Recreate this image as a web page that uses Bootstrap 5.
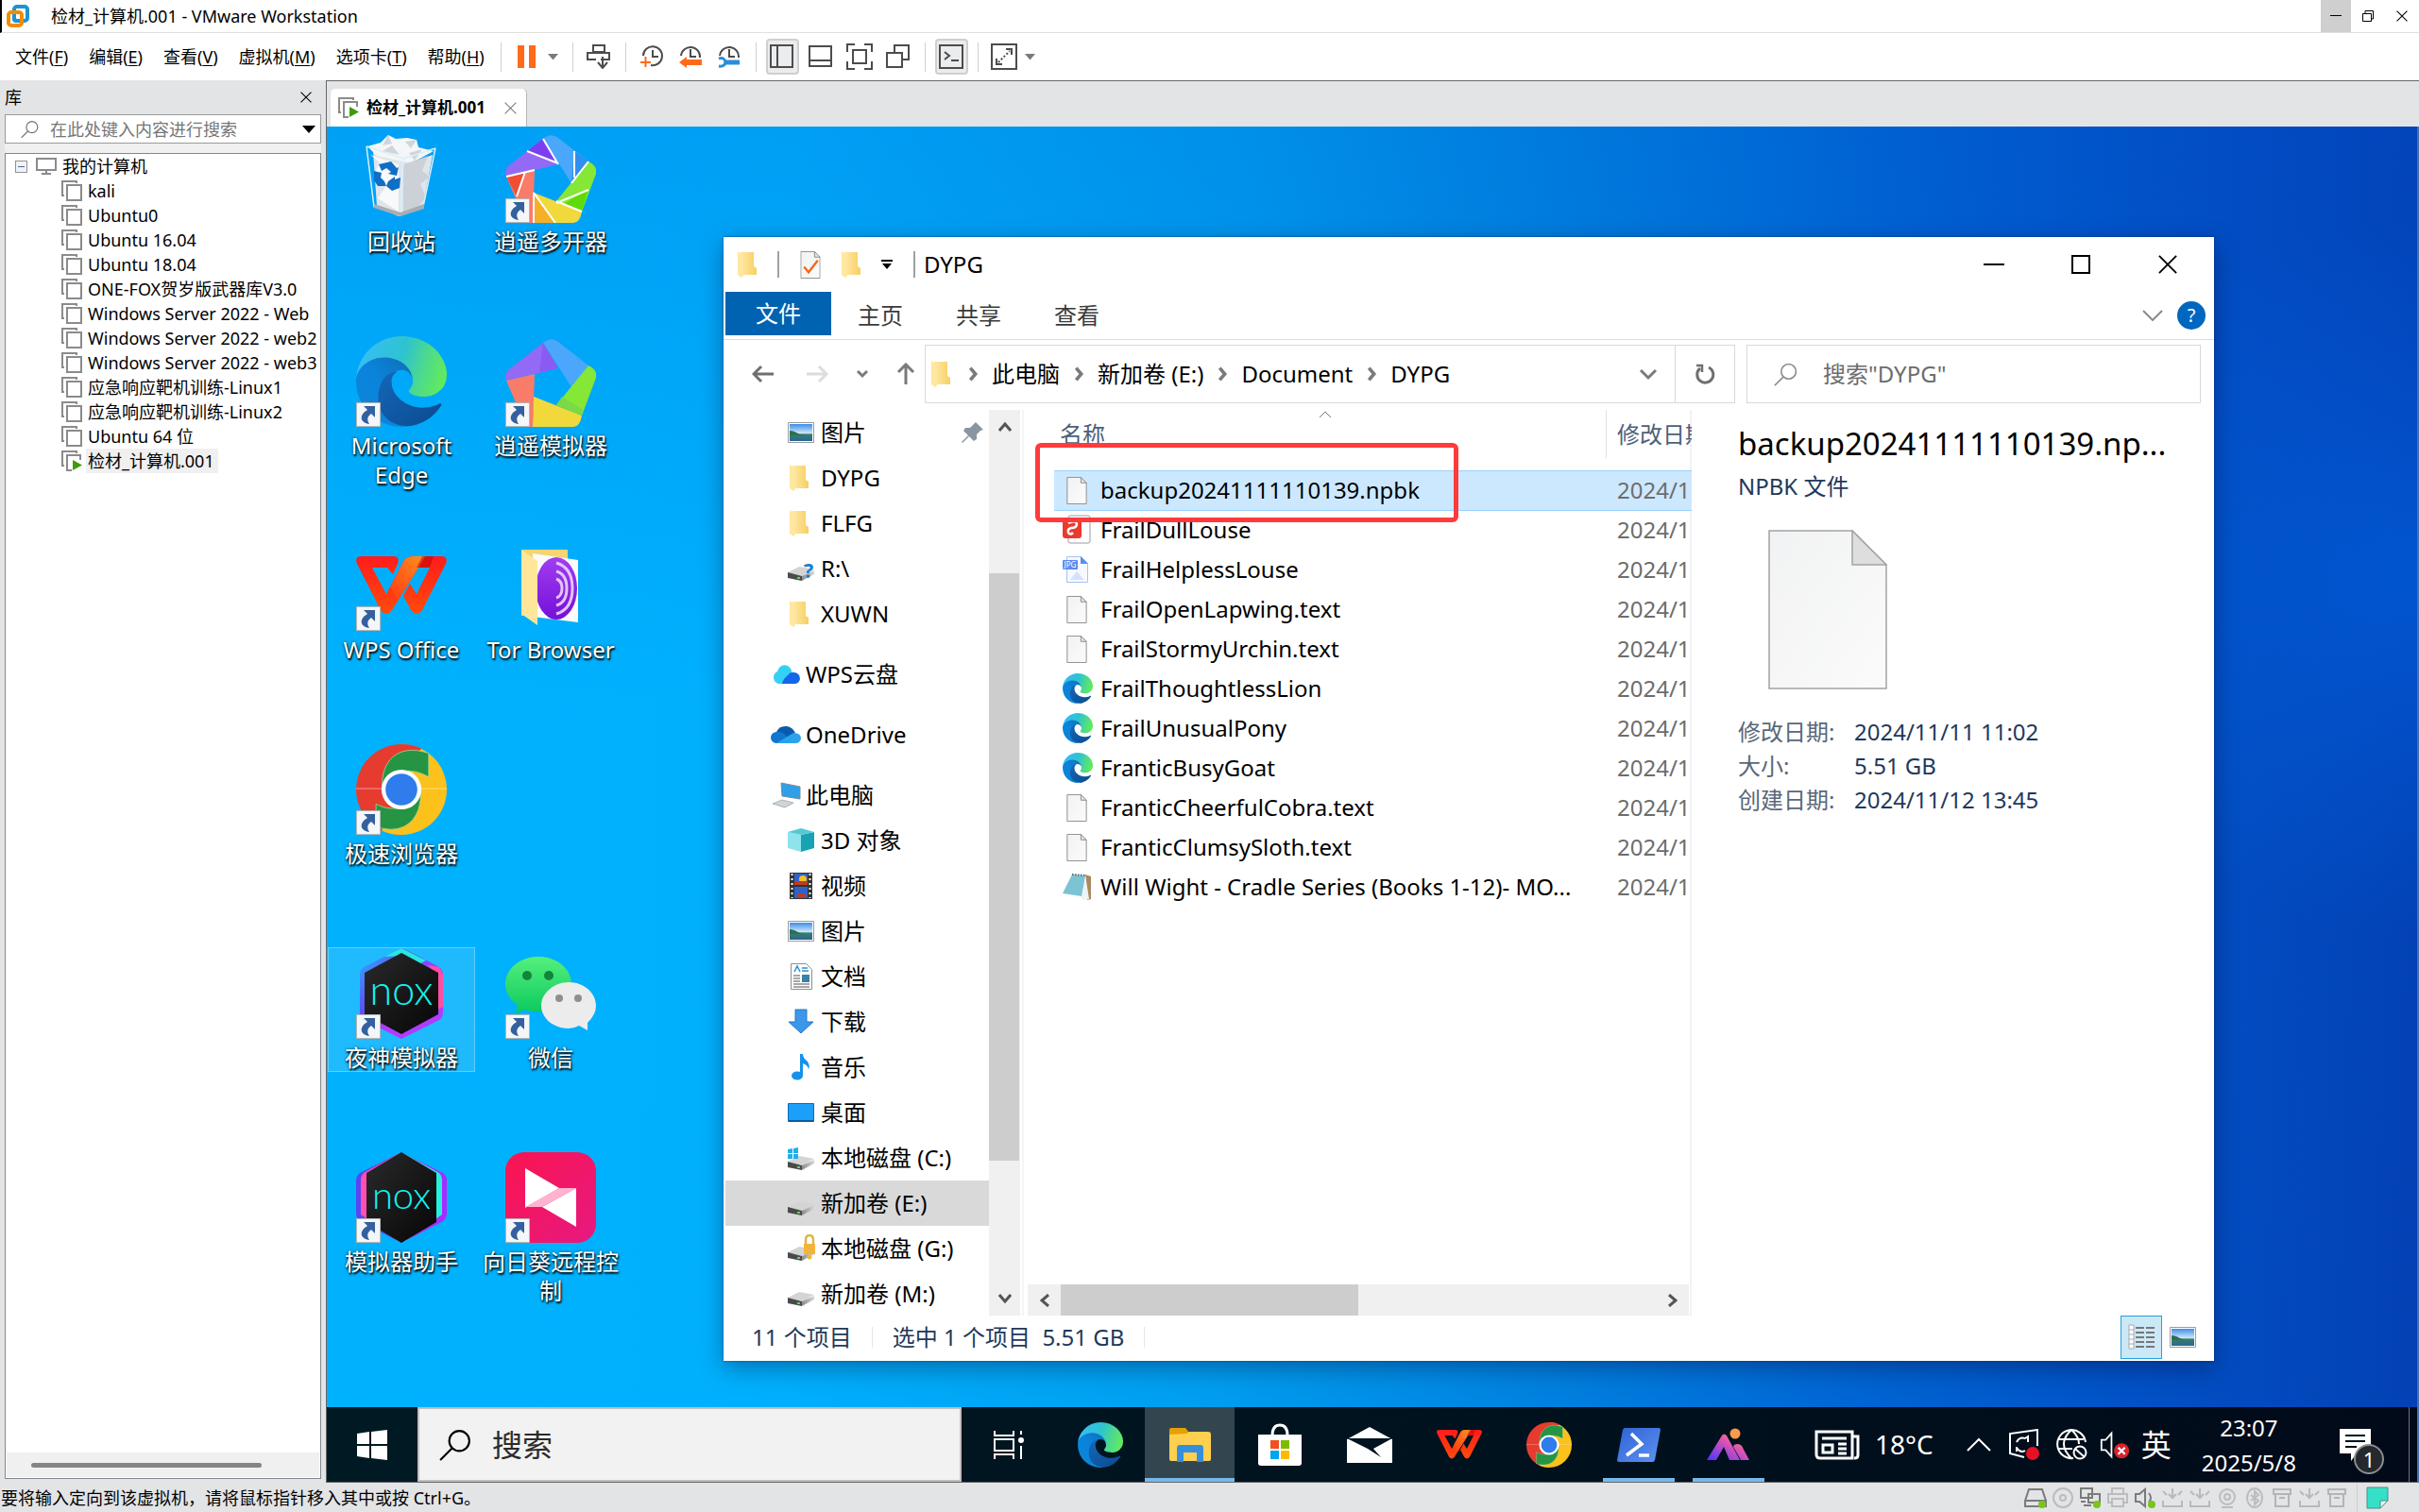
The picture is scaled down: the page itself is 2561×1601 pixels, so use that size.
<!DOCTYPE html>
<html lang="zh-CN">
<head>
<meta charset="utf-8">
<meta name="viewport" content="width=device-width, initial-scale=1">
<title>检材_计算机.001 - VMware Workstation</title>
<link href="https://cdn.jsdelivr.net/npm/bootstrap@5.3.0/dist/css/bootstrap.min.css" rel="stylesheet">
<style>
  body { font-family: "Noto Sans", "Noto Sans CJK SC", sans-serif; font-size: 18px; line-height: 26px; color: #000; background: #e3e4e6; }
  .btn { --bs-btn-font-size: inherit; --bs-btn-line-height: inherit; --bs-btn-color: inherit; --bs-btn-padding-x: 0; --bs-btn-padding-y: 0; --bs-btn-border-radius: 0; --bs-btn-border-width: 0; }
  a { color: inherit; text-decoration: none; }
  svg { flex: none; display: block; }
  input { min-width: 0; outline: 0; }
  u { text-underline-offset: 2px; }

  /* host window */
  .host-title { height: 35px; border-bottom: 1px solid #e0e0e0; border-left: 2px solid #000; }
  .host-title .btn { width: 36px; }
  .host-title .btn.hot { background: #cfcfcf; width: 32px; }
  .host-name { margin-left: 22px; padding-top: 4px; }
  .host-menu { height: 50px; padding-left: 16px; gap: 6px; background: #fff; }
  .menu-words { gap: 22px; margin-right: 7px; }
  .vline { width: 1px; height: 31px; background: #cfcfcf; margin: 0 4px; }
  .tool { width: 35px; height: 38px; }
  .tool.down { border: 2px solid #cfcfcf; background: #ebecee; border-radius: 4px; }
  .tool-caret { width: 20px; margin-left: -6px; }

  /* library */
  .library { width: 345px; padding: 0 5px 4px; }
  .lib-head { height: 36px; padding-right: 10px; }
  .lib-search { height: 31px; border: 1px solid #9a9a9a; padding: 0 5px 0 8px; }
  .lib-search input::placeholder { color: #777; opacity: 1; }
  .lib-gap { height: 10px; background: #f0f0f0; }
  .tree { border: 1px solid #828790; }
  .tree li { height: 26px; white-space: nowrap; padding-left: 59px; gap: 4px; }
  .tree li.root { padding-left: 10px; }
  .tree li a { padding: 0 2px; }
  .tree .on { background: #f0f0f0; padding-right: 4px; }
  .minus { width: 13px; height: 13px; border: 1px solid #919191; background: #f2f2f2; margin-right: 5px; }
  .minus::after { content: ""; display: block; width: 7px; height: 1px; margin: 5px 2px; background: #4568a8; }
  .tree-foot { height: 26px; background: #f0f0f0; margin: 0 1px 1px; padding-left: 26px; }
  .tree-foot div { width: 244px; height: 5px; border-radius: 3px; background: #858585; }

  /* tabs and guest */
  .stage { border-left: 1px solid #666; border-top: 1px solid #666; }
  .tabs { height: 48px; padding-left: 4px; }
  .vm-tab { width: 208px; height: 40px; background: #fff; border-radius: 5px 5px 0 0; border-right: 1px solid #b5b5b5; padding: 0 10px 0 8px; font-weight: 700; font-size: 17px; }
  .guest { border-bottom: 1px solid #666; border-right: 2px solid #4a6fae; }
  .desk { background: linear-gradient(180deg, rgba(0,70,200,.16), rgba(0,70,200,0) 45%), radial-gradient(circle at 100% 35%, rgba(0,100,230,.55), rgba(0,100,230,0) 16%), linear-gradient(92deg, #00b2fe 0%, #00b0fd 22%, #009eef 43%, #0083e0 58%, #0064d3 74%, #024fc4 88%, #0341b4 100%); }
  .shortcuts { display: grid; grid-template-columns: repeat(2, 158px); grid-auto-rows: 216px; padding-top: 5px; }
  .shortcut { margin: 0 1px 83px; padding: 1px 5px 0; text-align: center; color: #fff; font-size: 24px; line-height: 31px; text-shadow: 1px 2px 2px #000, 0 0 3px rgba(0,0,0,.7); height: 132px; }
  .shortcut svg { margin: 0 auto 4px; }
  .shortcut.on { background: rgba(255,255,255,.12); outline: 1px solid rgba(255,255,255,.3); outline-offset: -1px; }
  .shortcut svg text { text-shadow: none; }

  /* explorer */
  .explorer { position: absolute; left: 420px; top: 117px; right: 215px; bottom: 49px; background: #fff; font-size: 24px; line-height: 36px; box-shadow: 0 0 2px rgba(0,40,100,.8), 0 8px 24px rgba(0,0,40,.35); }
  .x-title { height: 58px; padding-right: 3px; }
  .qat { gap: 22px; padding-left: 15px; }
  .qat i { width: 2px; height: 28px; background: #a0a0a0; }
  .qat i.tail { margin-right: -13px; }
  .x-title .btn { width: 92px; }
  .ribbon { height: 51px; border-bottom: 1px solid #dadbdc; padding: 0 4px 0 2px; }
  .ribbon .btn { width: 104px; height: 49px; color: #3b3b3b; }
  .ribbon .btn.file { width: 112px; height: 46px; background: #0063b1; color: #fff; }
  .ribbon .btn.slim { width: 41px; }
  .addr-row { height: 74px; padding: 5px 14px 7px 0; }
  .hist { width: 213px; padding-left: 30px; gap: 29px; }
  .crumbs { border: 1px solid #d9d9d9; padding-left: 6px; gap: 14px; }
  .crumbs .go { width: 63px; border-left: 1px solid #d9d9d9; }
  .x-search { width: 481px; border: 1px solid #d9d9d9; margin-left: 12px; padding-left: 28px; gap: 27px; }
  .x-search svg { color: #8a8a8a; }
  .x-search input::placeholder { color: #6d6d6d; opacity: 1; }
  .nav-pane { width: 281px; padding-left: 2px; }
  .nav-pane a { height: 48px; padding-left: 64px; gap: 5px; white-space: nowrap; flex: none; }
  .nav-pane a.top { padding-left: 48px; margin-top: 16px; }
  .nav-pane a.on { background: #d9d9d9; }
  .nav-pane svg { width: 32px; height: 32px; }
  .nav-pane .pin { width: 24px; height: 24px; margin: 0 5px 0 auto; }
  .vbar { width: 35px; background: #f0f0f0; border-right: 2px solid #fff; }
  .vbar .btn { height: 36px; }
  .vbar .run { flex: 0 0 137px; }
  .vbar .thumb { flex: 0 0 622px; background: #cdcdcd; margin-right: 1px; }
  .list-pane { width: 709px; border-left: 2px solid #f5f5f5; border-right: 2px solid #f2f2f2; padding-left: 4px; }
  .filegrid { width: 675px; margin-left: 28px; table-layout: fixed; color: #000; }
  .filegrid col:first-child { width: 584px; }
  .filegrid th { height: 64px; padding: 0 0 12px 6px; font-weight: 400; color: #4c607a; white-space: nowrap; overflow: hidden; }
  .filegrid th + th { padding-left: 12px; background: linear-gradient(#e2e2e2,#e2e2e2) 0 0 / 1px 51px no-repeat; }
  .filegrid td { height: 42px; padding: 0 0 0 9px; white-space: nowrap; overflow: hidden; }
  .filegrid td + td { padding-left: 12px; color: #6d6d6d; }
  .filegrid .on td { background: #cce8ff; border-top: 1px solid #99d1ff; border-bottom: 1px solid #99d1ff; }
  .filegrid .doc { margin: 0 14px 0 4px; }
  .sort { position: absolute; left: 312px; top: 1px; }
  .ring { position: absolute; left: 12px; top: 35px; width: 448px; height: 84px; border: 5px solid #ff3b3b; border-radius: 6px; }
  .hbar { height: 33px; background: #f0f0f0; margin-right: 1px; }
  .hbar .btn { width: 35px; }
  .hbar .thumb { width: 315px; background: #cdcdcd; }
  .detail { padding: 15px 10px 0 49px; color: #1e395b; }
  .detail h1 { font-size: 33px; line-height: 42px; margin: 0 0 6px; color: #000; font-weight: 400; white-space: nowrap; }
  .detail svg { margin: 28px 0 27px 32px; }
  .detail dl { display: grid; grid-template-columns: 123px 1fr; margin: 0; }
  .detail dt { font-weight: 400; color: #5a6779; }
  .detail dd { margin: 0; }
  .x-status { height: 48px; padding: 0 11px 2px 30px; color: #1e395b; gap: 21px; }
  .x-status i { width: 1px; height: 22px; background: #e5e5e5; }
  .x-status .btn { width: 44px; height: 46px; }
  .x-status .btn.down { background: #cbe8f6; border: 1px solid #26a0da; }

  /* guest taskbar */
  .task { height: 79px; background: linear-gradient(90deg, #001a24, #00121e 55%, #020a19); color: #fff; font-size: 24px; line-height: 37px; }
  .start { width: 96px; }
  .t-search { width: 576px; background: #f2f2f2; border: 2px solid #bfbfbf; padding-left: 21px; gap: 22px; font-size: 32px; }
  .t-search input::placeholder { color: #2b2b2b; opacity: 1; }
  .app { width: 95px; border-bottom: 4px solid transparent !important; padding-top: 4px; }
  .app.run { background: linear-gradient(#76b9ed,#76b9ed) center bottom / 76px 4px no-repeat; background-origin: border-box; background-clip: border-box; }
  .app.on { background-color: #33464f; border-bottom-color: #76b9ed !important; }
  .app.view { width: 99px; }
  .big { font-size: 28px; }
  .ime { font-size: 32px; }
  .clock { margin: 0 38px 0 32px; text-align: center; }
  .note { position: relative; }
  .note span { position: absolute; left: 15px; top: 16px; width: 32px; height: 32px; border-radius: 50%; background: #25282c; border: 2px solid #8b8d90; font-size: 22px; line-height: 28px; text-align: center; }
  .peek { width: 9px; border-left: 1px solid #6b737d; }

  .host-status { height: 31px; padding: 0 32px 0 1px; }
  .host-status svg { width: 24px; height: 24px; }
  .devs { gap: 5px; }
</style>
<script src="https://cdn.jsdelivr.net/npm/bootstrap@5.3.0/dist/js/bootstrap.bundle.min.js"></script>
</head>
<body class="vh-100 overflow-hidden d-flex flex-column">

<svg width="0" height="0" class="position-absolute" aria-hidden="true">
  <defs>
    <linearGradient id="gE1" x1="0" y1="0" x2="1" y2="1"><stop offset="0" stop-color="#1467b8"/><stop offset="1" stop-color="#0c4a8f"/></linearGradient>
    <linearGradient id="gE2" x1="1" y1="0" x2="0" y2="1"><stop offset="0" stop-color="#0f6cae"/><stop offset=".5" stop-color="#0b83dc"/><stop offset="1" stop-color="#0b86d8"/></linearGradient>
    <linearGradient id="gE3" x1="0" y1=".3" x2="1" y2=".5"><stop offset="0" stop-color="#38bdf8"/><stop offset=".5" stop-color="#2ec3cf"/><stop offset=".75" stop-color="#4cd98f"/><stop offset="1" stop-color="#62ea5e"/></linearGradient>
    <linearGradient id="gW" x1="0" y1="0" x2="0" y2="1"><stop offset="0" stop-color="#ff1c1c"/><stop offset="1" stop-color="#ff4b0a"/></linearGradient>
    <linearGradient id="gWo" x1="1" y1="0" x2="0" y2="1"><stop offset="0" stop-color="#ff9020"/><stop offset="1" stop-color="#ff3a12"/></linearGradient>
    <linearGradient id="gF" x1="0" y1="0" x2="1" y2="0"><stop offset="0" stop-color="#ffe9a6"/><stop offset="1" stop-color="#f7cf63"/></linearGradient>
    <linearGradient id="gNx" x1="0" y1="0" x2="1" y2="1"><stop offset="0" stop-color="#2bb7ff"/><stop offset=".35" stop-color="#5a52f5"/><stop offset=".6" stop-color="#b13bff"/><stop offset="1" stop-color="#b13bff"/></linearGradient>
    <linearGradient id="gNb" x1="0" y1="0" x2="1" y2="1"><stop offset="0" stop-color="#2a2a2c"/><stop offset="1" stop-color="#060606"/></linearGradient>
    <linearGradient id="gWc" x1="0" y1="0" x2="0" y2="1"><stop offset="0" stop-color="#55f07d"/><stop offset="1" stop-color="#0ac85c"/></linearGradient>
    <linearGradient id="gSf" x1="0" y1="0" x2="1" y2="1"><stop offset="0" stop-color="#fb1450"/><stop offset="1" stop-color="#e51a80"/></linearGradient>
    <linearGradient id="gSky" x1="0" y1="0" x2="0" y2="1"><stop offset="0" stop-color="#3f8ee8"/><stop offset=".55" stop-color="#cfe9fb"/><stop offset=".6" stop-color="#3d7d64"/><stop offset="1" stop-color="#27679a"/></linearGradient>
    <linearGradient id="gDr" x1="0" y1="0" x2="1" y2="0"><stop offset="0" stop-color="#8c8c8c"/><stop offset="1" stop-color="#d9d9d9"/></linearGradient>
    <linearGradient id="gPs" x1="0" y1="0" x2="1" y2="1"><stop offset="0" stop-color="#2f62d6"/><stop offset="1" stop-color="#5d93f0"/></linearGradient>
    <linearGradient id="gAi" x1="1" y1="0" x2="0" y2="1"><stop offset="0" stop-color="#ffa64a"/><stop offset=".4" stop-color="#e256b0"/><stop offset="1" stop-color="#4a33ff"/></linearGradient>
    <linearGradient id="gTor" x1="0" y1="0" x2="0" y2="1"><stop offset="0" stop-color="#a13df0"/><stop offset="1" stop-color="#7410d8"/></linearGradient>
    <linearGradient id="gPg" x1="0" y1="0" x2="1" y2="1"><stop offset="0" stop-color="#f1f2f3"/><stop offset="1" stop-color="#fbfbfb"/></linearGradient>
  </defs>
  <symbol id="edge" viewBox="0 0 256 256">
    <path fill="url(#gE2)" d="M105.73 241.42a79.2 79.2 0 01-22.74-21.34 80.72 80.72 0 0129.53-120.48c3.14-1.46 8.46-4.1 15.54-3.99a32.37 32.37 0 0125.69 13 31.88 31.88 0 016.37 18.67c0-.2 24.48-79.6-80-79.6C36.2 47.7 0 89.5 0 126a130.15 130.15 0 0012.11 56 128 128 0 00156.38 67.11 75.55 75.55 0 01-62.78-8z"/>
    <path fill="url(#gE1)" d="M231 190.5a94 94 0 01-10.54 4.71 101.9 101.9 0 01-35.9 6.46c-47.32 0-88.54-32.55-88.54-74.32a31.48 31.48 0 0116.44-27.3c-42.8 1.8-53.8 46.4-53.8 72.53 0 73.88 68.09 81.37 82.76 81.37 7.91 0 19.84-2.3 27-4.56l1.31-.44a128.34 128.34 0 0066.6-52.8 4 4 0 00-5.32-5.75z" transform="translate(4)"/>
    <path fill="url(#gE3)" d="M152.33 148.86c-.81 1.05-3.3 2.5-3.3 5.66 0 2.61 1.7 5.12 4.72 7.23 14.38 10 41.49 8.68 41.56 8.68a59.56 59.56 0 0030.27-8.35A61.38 61.38 0 00256 109.2c.26-22.41-8-37.31-11.34-43.91C223.46 23.84 177.72 0 128 0A128 128 0 000 126.2c.48-36.54 36.8-66.05 80-66.05 3.5 0 23.46.34 42 10.07 16.34 8.58 24.9 18.94 30.85 29.21 6.18 10.67 7.28 24.15 7.28 29.52s-2.74 13.33-7.8 19.91z"/>
  </symbol>
  <symbol id="chrome" viewBox="0 0 100 100">
    <path fill="#e63c30" d="M50 0a50 50 0 0 0 0 100z"/><path fill="#fcc11a" d="M50 0a50 50 0 0 1 0 100z"/>
    <path fill="#e63c30" d="M50 0Q64 0 72 5L50 30z"/><path fill="#fcc11a" d="M50 100Q36 100 28 95L50 70z"/>
    <path d="M0 49H100" stroke="#fff" stroke-width=".7" opacity=".7"/>
    <path fill="#259543" stroke="#a8d9a0" stroke-width=".8" d="M29 48C27 20 45-2 80 10V36C62 26 44 26 29 48z"/>
    <path fill="#259543" stroke="#a8d9a0" stroke-width=".8" d="M71 52C73 80 55 102 22 91V66C38 74 56 74 71 52z"/>
    <circle cx="50" cy="50" r="22" fill="#fff"/><circle cx="50" cy="50" r="17.500" fill="#2f7ced"/>
  </symbol>
  <symbol id="wps" viewBox="0 0 96 62">
    <path fill="url(#gW)" fill-rule="evenodd" d="M1 8Q-2 0 6 0H39Q47 0 44 8L39 19 33 12H17L32 40 50 6Q53 0 60 0H90Q98 0 95 8L70 57Q64 65 58 57L50 42 57 29 64 40 78 12H66L38 57Q32 65 26 57z"/>
    <path fill="url(#gWo)" d="M50 6Q53 0 60 0H73L66 12 44 47 36 33z"/><path fill="#b80000" opacity=".5" d="M70 0H82L78 12H64z"/>
  </symbol>
  <symbol id="cut" viewBox="0 0 26 26"><path fill="#f4f6f8" stroke="#b5b5b5" d="M.5.5h25v25H.5z"/><path fill="#34609f" d="M8 4h12v12l-4-4c-4 3-5 6-2 11C5 22 2 14 12 8z"/></symbol>
  <symbol id="folder" viewBox="0 0 20 28"><path fill="url(#gF)" d="M3 1h14v15l3 2v7H3z"/><path fill="#ffe7a0" d="M0 0l6 4v22l-2 2-4-3z"/></symbol>
  <symbol id="page" viewBox="0 0 22 30"><path fill="url(#gPg)" stroke="#8e8e8e" d="M.5.5h15l6 6v23H.5z"/><path fill="#e3e3e3" stroke="#8e8e8e" d="M15.500.5v6h6z"/></symbol>
  <symbol id="clones" viewBox="0 0 22 22"><g fill="none" stroke="#8b8b8b" stroke-width="2"><path d="M3 16H1V1h15v2"/><path fill="#fff" d="M6 5h15v16H6z"/></g></symbol>
  <symbol id="clones-on" viewBox="0 0 22 22"><g fill="none" stroke="#8b8b8b" stroke-width="2"><path d="M3 16H1V1h15v2M20 10V5H6v16h5"/></g><path fill="#3f9b0b" d="M12 10l10 5.500-10 5.500z"/></symbol>
  <symbol id="glass" viewBox="0 0 32 32"><g fill="none" stroke="currentColor" stroke-width="2"><circle cx="20" cy="12" r="10"/><path d="M13 19L1 31"/></g></symbol>
  <symbol id="drive" viewBox="0 0 32 32"><path fill="#d4d4d4" d="M2 20l12-6 16 3-13 7z"/><path fill="url(#gDr)" d="M17 24l13-6v4l-13 7z"/><path fill="#4a4a4a" d="M2 20l15 4v5L2 26z"/><path fill="#5fd35f" d="M12 25h3v2h-3z"/></symbol>
  <symbol id="pic" viewBox="0 0 32 32"><path fill="#fff" stroke="#9a9a9a" d="M2.500 5.500h27v21h-27z"/><path fill="url(#gSky)" d="M4 7h24v18H4z"/><path fill="#2b7050" d="M4 14c6 0 10 5 16 5H4z"/></symbol>
  <symbol id="winlogo" viewBox="0 0 32 32"><path d="M0 4l13-2v13H0zM15 2l17-2v15H15zM0 17h13v13l-13-2zM15 17h17v15l-17-2z"/></symbol>
  <symbol id="chev" viewBox="0 0 12 20"><path fill="none" stroke="#7a7a7a" stroke-width="4" d="M3 3l6 7-6 7"/></symbol>
  <symbol id="closex" viewBox="0 0 22 22"><path fill="none" stroke="currentColor" stroke-width="2" d="M1 1l20 20M21 1L1 21"/></symbol>
  <symbol id="usb" viewBox="0 0 24 24"><path fill="none" stroke="#b9b9bd" stroke-width="2" d="M12 2v10M8 8l4 4 4-4M2 15v6h20v-6M2 5l4 4M22 5l-4 4"/></symbol>
  <symbol id="box" viewBox="0 0 24 24"><path fill="none" stroke="#b4b4b8" stroke-width="2" d="M3 3h18v5H3zM5 8v13h14V8M9 12h6"/></symbol>
</svg>

<header class="host-title d-flex bg-white flex-shrink-0">
  <svg class="ms-1 mt-1" width="26" height="26" viewBox="0 0 26 26" fill="none" stroke-width="4"><rect x="9" y="3" width="14" height="15" rx="3" stroke="#1f93d0"/><rect x="3" y="9" width="14" height="14" rx="3" stroke="#f38b00"/><path stroke="#1f93d0" d="M9 12v4q0 2 2 2h4"/></svg>
  <span class="host-name">检材_计算机.001 - VMware Workstation</span>
  <div class="ms-auto d-flex">
    <button class="btn hot" aria-label="最小化"><svg class="m-auto" width="12" height="2"><path d="M0 0h12v1H0z"/></svg></button>
    <button class="btn" aria-label="还原"><svg class="m-auto" width="14" height="14" fill="none" stroke="#000"><path d="M1.500 4.500h9v8h-9zM4 4V1.500h8.500V10H11"/></svg></button>
    <button class="btn" aria-label="关闭"><svg class="m-auto" width="12" height="12"><use href="#closex"/></svg></button>
  </div>
</header>

<nav class="host-menu d-flex align-items-center flex-shrink-0">
  <div class="menu-words d-flex">
    <button class="btn">文件(<u>F</u>)</button><button class="btn">编辑(<u>E</u>)</button><button class="btn">查看(<u>V</u>)</button><button class="btn">虚拟机(<u>M</u>)</button><button class="btn">选项卡(<u>T</u>)</button><button class="btn">帮助(<u>H</u>)</button>
  </div>
  <div class="vline"></div>
  <button class="btn tool" aria-label="挂起"><svg class="m-auto" width="20" height="26"><path fill="#ff6a1a" d="M0 1h7v24H0zM12 1h7v24h-7z"/></svg></button>
  <button class="btn tool-caret" aria-label="电源选项"><svg class="m-auto" width="11" height="7"><path fill="#7a7a7a" d="M0 0h11l-5.500 6.500z"/></svg></button>
  <div class="vline"></div>
  <button class="btn tool" aria-label="发送按键"><svg class="m-auto" width="26" height="26" fill="none" stroke="#4c4c4c" stroke-width="2"><path d="M7 1h12v7H7zM15 16h9V9H1v7h9M17 13v11M12 19l5 6 5-6"/></svg></button>
  <div class="vline"></div>
  <button class="btn tool" aria-label="拍摄快照"><svg class="m-auto" width="26" height="26" fill="none" stroke="#4c4c4c" stroke-width="2"><path d="M4 12a10 10 0 1 1 8 10M14 6v7h6"/><path stroke="#ff6a1a" d="M1 19h11M6.500 13v11"/></svg></button>
  <button class="btn tool" aria-label="恢复快照"><svg class="m-auto" width="26" height="26" fill="none" stroke="#4c4c4c" stroke-width="2"><path d="M3 12a10 10 0 1 1 20 2M13 5v8h6"/><path fill="#ff6a1a" stroke="none" d="M1 19l8-6v3h16v6H9v3z"/></svg></button>
  <button class="btn tool" aria-label="管理快照"><svg class="m-auto" width="26" height="26" fill="none" stroke="#4c4c4c" stroke-width="2"><path d="M3 12a10 10 0 1 1 20 2M13 5v8h6"/><path stroke="#2a8fd8" stroke-width="5" d="M9 19h15"/><path stroke="#2a8fd8" stroke-width="3" d="M2 15q6-2 7 4-1 5-7 4"/></svg></button>
  <div class="vline"></div>
  <button class="btn tool down" aria-label="显示库"><svg class="m-auto" width="26" height="26" fill="none" stroke="#4c4c4c" stroke-width="2"><path d="M1 1h23v23H1zM8 1v23"/></svg></button>
  <button class="btn tool" aria-label="缩略图栏"><svg class="m-auto" width="26" height="26" fill="none" stroke="#4c4c4c" stroke-width="2"><path d="M1 2h23v21H1zM1 17h23"/></svg></button>
  <button class="btn tool" aria-label="全屏"><svg class="m-auto" width="28" height="28" fill="none" stroke="#4c4c4c" stroke-width="2"><path d="M1 9V1h8M19 1h8v8M27 19v8h-8M9 27H1v-8M7 7h14v14H7z"/></svg></button>
  <button class="btn tool" aria-label="Unity"><svg class="m-auto" width="26" height="26" fill="none" stroke="#4c4c4c" stroke-width="2"><path d="M9 8V1h15v15h-7M1 9h16v15H1z"/></svg></button>
  <div class="vline"></div>
  <button class="btn tool down" aria-label="控制台"><svg class="m-auto" width="28" height="28" fill="none" stroke="#4c4c4c" stroke-width="2"><path d="M2 2h24v24H2zM7 9l5 4-5 4M14 18h8"/></svg></button>
  <div class="vline"></div>
  <button class="btn tool" aria-label="拉伸"><svg class="m-auto" width="28" height="28" fill="none" stroke="#4c4c4c" stroke-width="2"><path d="M1 1h26v26H1zM16 6h6v6M6 16v6h6"/><path stroke-dasharray="2 2" d="M8 20L20 8"/></svg></button>
  <button class="btn tool-caret" aria-label="拉伸选项"><svg class="m-auto" width="11" height="7"><path fill="#7a7a7a" d="M0 0h11l-5.500 6.500z"/></svg></button>
</nav>

<div class="d-flex flex-grow-1 overflow-hidden">
  <aside class="library d-flex flex-column flex-shrink-0">
    <div class="lib-head d-flex align-items-center justify-content-between"><span>库</span><button class="btn" aria-label="关闭库"><svg width="12" height="12"><use href="#closex"/></svg></button></div>
    <label class="lib-search d-flex align-items-center bg-white">
      <svg class="mx-2 text-secondary" width="19" height="20"><use href="#glass"/></svg>
      <input class="border-0 p-0 ms-1 flex-grow-1 bg-transparent" placeholder="在此处键入内容进行搜索" aria-label="搜索库">
      <svg width="14" height="8"><path d="M0 0h14L7 8z"/></svg>
    </label>
    <div class="lib-gap"></div>
    <div class="tree flex-grow-1 bg-white d-flex flex-column justify-content-between overflow-hidden">
      <ul class="list-unstyled mb-0 overflow-hidden">
        <li class="root d-flex align-items-center"><span class="minus"></span><svg width="22" height="18" fill="none" stroke="#8b8b8b" stroke-width="2"><path d="M1 1h20v12H1zM11 13v3M6 17h10"/></svg><a href="#">我的计算机</a></li>
        <li class="d-flex align-items-center"><svg width="22" height="22"><use href="#clones"/></svg><a href="#">kali</a></li>
        <li class="d-flex align-items-center"><svg width="22" height="22"><use href="#clones"/></svg><a href="#">Ubuntu0</a></li>
        <li class="d-flex align-items-center"><svg width="22" height="22"><use href="#clones"/></svg><a href="#">Ubuntu 16.04</a></li>
        <li class="d-flex align-items-center"><svg width="22" height="22"><use href="#clones"/></svg><a href="#">Ubuntu 18.04</a></li>
        <li class="d-flex align-items-center"><svg width="22" height="22"><use href="#clones"/></svg><a href="#">ONE-FOX贺岁版武器库V3.0</a></li>
        <li class="d-flex align-items-center"><svg width="22" height="22"><use href="#clones"/></svg><a href="#">Windows Server 2022 - Web</a></li>
        <li class="d-flex align-items-center"><svg width="22" height="22"><use href="#clones"/></svg><a href="#">Windows Server 2022 - web2</a></li>
        <li class="d-flex align-items-center"><svg width="22" height="22"><use href="#clones"/></svg><a href="#">Windows Server 2022 - web3</a></li>
        <li class="d-flex align-items-center"><svg width="22" height="22"><use href="#clones"/></svg><a href="#">应急响应靶机训练-Linux1</a></li>
        <li class="d-flex align-items-center"><svg width="22" height="22"><use href="#clones"/></svg><a href="#">应急响应靶机训练-Linux2</a></li>
        <li class="d-flex align-items-center"><svg width="22" height="22"><use href="#clones"/></svg><a href="#">Ubuntu 64 位</a></li>
        <li class="d-flex align-items-center"><svg width="22" height="22"><use href="#clones-on"/></svg><a href="#" class="on">检材_计算机.001</a></li>
      </ul>
      <div class="tree-foot d-flex align-items-center"><div></div></div>
    </div>
  </aside>

  <main class="stage flex-grow-1 d-flex flex-column overflow-hidden">
    <div class="tabs d-flex align-items-end flex-shrink-0">
      <div class="vm-tab d-flex align-items-center"><svg width="22" height="22"><use href="#clones-on"/></svg><span class="ms-2">检材_计算机.001</span><button class="btn ms-auto text-black-50" aria-label="关闭选项卡"><svg width="13" height="13"><use href="#closex"/></svg></button></div>
    </div>

    <div class="guest flex-grow-1 d-flex flex-column overflow-hidden">
      <div class="desk flex-grow-1 position-relative overflow-hidden">
        <div class="shortcuts">
          <a href="#" class="shortcut"><svg width="96" height="96" viewBox="0 0 96 96"><path fill="#dfe5ea" d="M18 20l40 12 23-8-10 54-26 11-23-10z"/><path fill="#f5f6f7" d="M12 15l14-4 8-8 8 4 12-1 10 2 2 8 16 4-24 13-36-8z"/><path fill="#cfd5da" d="M34 3l4 9-10 2zM52 10l12-2-6 9zM28 20l10-6 8 10zM56 22l14-4-8 12z"/><path fill="#fff" opacity=".75" d="M15 24l10 8-6 12 12 14-8 12 22 14V34z"/><path fill="#c3c9cf" opacity=".7" d="M50 34l26-9-6 16 8 6-10 8 6 14-12 14-12 4z"/><path fill="none" stroke="#d8f0fb" stroke-width="1.500" d="M11 15l39 13 34-11M11 15l8 64 28 9 24-9 13-62M50 28l-3 60"/><path fill="#a7adb3" d="M19 76l28 9 25-9v5l-25 8-28-9z"/><path fill="#0f6fc6" d="M24 34l13-3 6 7 2-1-2 9-9-2 3-2-5-4-5 3zM19 41l8 2-1 5 4 4 2 5H23l-4-6zM34 52l7-5v3l6-2-1 11-8 3-6-5z"/></svg>回收站</a>
          <a href="#" class="shortcut"><svg width="96" height="96" viewBox="0 0 96 96"><path fill="#936af5" d="M40 7L56 34 1 47Q-1 40 3 36z"/><path fill="#7b3ff2" d="M40 7L56 34 23 20z"/><path fill="#4aa7fb" d="M40 7Q48 0 56 6L88 31 70 54z"/><path fill="#2f8fee" d="M73 20L88 31 70 54z"/><path fill="#f97b69" d="M1 47L31 40 29 96H22z"/><path fill="#f04f33" d="M1 47l20-5-9 26z"/><path fill="#f2d93b" d="M30 64L81 84Q79 96 72 96H29z"/><path fill="#f5b027" d="M30 64L52 96H29z"/><path fill="#85e736" d="M88 31Q98 36 96 44L81 84 54 73z"/><path fill="#5ddc07" d="M88 60L81 84 62 76z"/><path fill="none" stroke="#fff" stroke-width="2" d="M40 7L56 34M23 20l33 13M1 47l30-7M21 42L12 68M88 31L70 54M73 20v28M54 75l34-14M54 73l27 11M30 64v32M30 64l23 32"/><use href="#cut" y="70" width="26" height="26"/></svg>逍遥多开器</a>
          <a href="#" class="shortcut"><svg width="96" height="96" viewBox="0 0 96 96"><use href="#edge" width="96" height="96"/><use href="#cut" y="70" width="26" height="26"/></svg>Microsoft Edge</a>
          <a href="#" class="shortcut"><svg width="96" height="96" viewBox="0 0 96 96"><path fill="#936af5" d="M40 7L56 34 1 47Q-1 40 3 36z"/><path fill="#8452f0" opacity=".6" d="M40 7L56 34 36 38z"/><path fill="#4aa7fb" d="M40 7Q48 0 56 6L88 31 70 54z"/><path fill="#f97b69" d="M1 47L31 40 29 96H22z"/><path fill="#f2d93b" d="M30 64L81 84Q79 96 72 96H29z"/><path fill="#85e736" d="M88 31Q98 36 96 44L81 84 54 73z"/><path fill="#7ad944" d="M60 64L82 78 81 84 54 73z"/><use href="#cut" y="70" width="26" height="26"/></svg>逍遥模拟器</a>
          <a href="#" class="shortcut"><svg width="96" height="96" viewBox="0 0 96 96"><use href="#wps" y="17" width="96" height="62"/><use href="#cut" y="70" width="26" height="26"/></svg>WPS Office</a>
          <a href="#" class="shortcut"><svg width="96" height="96" viewBox="0 0 96 96"><path fill="#f6d373" d="M17 10h49v70H17z"/><path fill="#fbfbfb" d="M29 14l48 7v66l-48-6z"/><ellipse cx="54" cy="51" rx="22" ry="33" fill="url(#gTor)"/><g fill="none" stroke="#e3c4fb" stroke-width="3"><path d="M54 24q17 5 17 27t-17 27M54 33q11 3 11 18t-11 18M54 41q6 2 6 10t-6 10"/></g><path fill="#ffe69a" d="M17 10l17 12v68L17 78z"/></svg>Tor Browser</a>
          <a href="#" class="shortcut"><svg width="96" height="96"><use href="#chrome"/><use href="#cut" y="70" width="26" height="26"/></svg>极速浏览器</a>
          <span></span>
          <a href="#" class="shortcut on"><svg width="96" height="96" viewBox="0 0 96 96"><path fill="url(#gNx)" d="M48 0Q51 0 88 20 92 23 92 28V68Q92 73 88 76L48 96 8 76Q4 73 4 68V28Q4 23 8 20z"/><path fill="#25e8e0" d="M30 9L48 0 74 13 66 17 48 8z"/><path fill="#ff4fa5" d="M76 18L88 20 92 28V62L84 66V26z"/><path fill="url(#gNb)" d="M48 5L87 26V70L48 91 9 70V26z"/><text x="48" y="60" text-anchor="middle" font-family="Lato" font-weight="300" font-size="43" fill="#12f5f0">nox</text><use href="#cut" y="70" width="26" height="26"/></svg>夜神模拟器</a>
          <a href="#" class="shortcut"><svg width="96" height="96" viewBox="0 0 96 96"><path fill="url(#gWc)" d="M35 9c20 0 35 13 35 29S55 67 35 67q-9 0-15-2l-9 5 2-10C5 55 0 47 0 38 0 22 15 9 35 9z"/><circle cx="23" cy="29" r="5" fill="#12843c"/><circle cx="46" cy="29" r="5" fill="#12843c"/><path fill="#ececec" d="M67 36c16 0 29 11 29 25q0 9-9 18l0 8-9-5q-5 3-11 3c-16 0-29-11-29-24s13-25 29-25z"/><circle cx="57" cy="53" r="4" fill="#8f8f8f"/><circle cx="77" cy="53" r="4" fill="#8f8f8f"/><use href="#cut" y="70" width="26" height="26"/></svg>微信</a>
          <a href="#" class="shortcut"><svg width="96" height="96" viewBox="0 0 96 96"><path fill="#5a45f0" d="M44 2L4 22Q0 25 0 30V64Q0 70 4 73L44 94z"/><path fill="#a92bff" d="M52 2L92 22Q96 25 96 30V64Q96 70 92 73L52 94z"/><path fill="#ff4fb0" d="M44 2L8 22Q5 25 5 30V66L44 94z"/><path fill="#25f0dc" d="M52 2L88 22Q91 25 91 30V66L52 94z"/><path fill="url(#gNb)" d="M48 0L85 22V74L48 96 11 74V22z"/><text x="48" y="60" text-anchor="middle" font-family="Lato" font-weight="300" font-size="40" fill="#12f5f0">nox</text><use href="#cut" y="70" width="26" height="26"/></svg>模拟器助手</a>
          <a href="#" class="shortcut"><svg width="96" height="96" viewBox="0 0 96 96"><rect width="96" height="96" rx="20" fill="url(#gSf)"/><path fill="#fff" d="M21 17L57 38 21 59zM75 38V79L39 58z"/><path fill="#ffb3d0" d="M57 38H75L39 58H21z"/><use href="#cut" y="70" width="26" height="26"/></svg>向日葵远程控制</a>
        </div>

        <section class="explorer d-flex flex-column">
          <div class="x-title d-flex flex-shrink-0">
            <div class="qat d-flex align-items-center">
              <svg width="20" height="28"><use href="#folder"/></svg><i></i>
              <svg width="22" height="29" viewBox="0 0 22 30"><use href="#page"/><path fill="none" stroke="#f26a1b" stroke-width="2.500" d="M4 17l5 6 10-13"/></svg>
              <svg width="20" height="28"><use href="#folder"/></svg>
              <svg width="12" height="10"><path d="M0 0h12v2H0zM1 4h10l-5 6z"/></svg><i class="tail"></i>
              <span>DYPG</span>
            </div>
            <div class="ms-auto d-flex">
              <button class="btn" aria-label="最小化"><svg class="m-auto" width="22" height="22"><path d="M0 10h22v2H0z"/></svg></button>
              <button class="btn" aria-label="最大化"><svg class="m-auto" width="20" height="20"><path fill="none" stroke="#000" stroke-width="2" d="M1 1h18v18H1z"/></svg></button>
              <button class="btn" aria-label="关闭"><svg class="m-auto" width="20" height="20"><use href="#closex"/></svg></button>
            </div>
          </div>
          <div class="ribbon d-flex flex-shrink-0">
            <button class="btn file">文件</button><button class="btn">主页</button><button class="btn">共享</button><button class="btn">查看</button>
            <button class="btn slim ms-auto" aria-label="展开功能区"><svg class="m-auto" width="22" height="12"><path fill="none" stroke="#8b8b8b" stroke-width="2" d="M1 1l10 10L21 1"/></svg></button>
            <button class="btn slim" aria-label="帮助"><svg class="m-auto" width="30" height="30"><circle cx="15" cy="15" r="15" fill="#0067c0"/><text x="15" y="22" text-anchor="middle" font-size="20" fill="#fff">?</text></svg></button>
          </div>
          <div class="addr-row d-flex flex-shrink-0">
            <div class="hist d-flex align-items-center flex-shrink-0">
              <button class="btn me-1" aria-label="后退"><svg width="24" height="20" fill="none" stroke="#6f6f6f" stroke-width="3"><path d="M2 10h21M10 2l-8 8 8 8"/></svg></button>
              <button class="btn" aria-label="前进"><svg width="24" height="20" fill="none" stroke="#dcdcdc" stroke-width="3"><path d="M22 10H1M14 2l8 8-8 8"/></svg></button>
              <button class="btn" aria-label="最近位置"><svg width="14" height="10" fill="none" stroke="#7a7a7a" stroke-width="3"><path d="M2 2l5 5 5-5"/></svg></button>
              <button class="btn" aria-label="向上"><svg width="20" height="24" fill="none" stroke="#7a7a7a" stroke-width="3"><path d="M10 23V2M2 10l8-8 8 8"/></svg></button>
            </div>
            <div class="crumbs d-flex align-items-center flex-grow-1">
              <svg width="20" height="28"><use href="#folder"/></svg><svg class="ms-1" width="12" height="18"><use href="#chev"/></svg>
              <a href="#">此电脑</a><svg width="12" height="18"><use href="#chev"/></svg><a href="#">新加卷 (E:)</a><svg width="12" height="18"><use href="#chev"/></svg><a href="#">Document</a><svg width="12" height="18"><use href="#chev"/></svg><a href="#">DYPG</a>
              <button class="btn ms-auto me-1" aria-label="以前的位置"><svg width="20" height="13" fill="none" stroke="#7a7a7a" stroke-width="3"><path d="M2 2l8 8 8-8"/></svg></button>
              <button class="btn go h-100" aria-label="刷新"><svg class="m-auto" width="22" height="22" fill="none" stroke="#6f6f6f" stroke-width="3"><path d="M15 4a8.500 8.500 0 1 1-9 1"/><path d="M2 2h6v7" stroke-width="2.500"/></svg></button>
            </div>
            <label class="x-search d-flex align-items-center flex-shrink-0">
              <svg width="25" height="25"><use href="#glass"/></svg>
              <input class="border-0 p-0 flex-grow-1" placeholder='搜索"DYPG"' aria-label="搜索">
            </label>
          </div>

          <div class="d-flex flex-grow-1 overflow-hidden">
            <nav class="nav-pane d-flex flex-column overflow-hidden flex-shrink-0">
              <a href="#" class="d-flex align-items-center"><svg><use href="#pic"/></svg>图片<svg class="pin" viewBox="0 0 24 24"><path fill="#8995a0" d="M15 1l8 8-3 1-4 4v5l-3 2-5-5-7 7-1-1 7-7-5-5 2-3h5l4-4z"/></svg></a>
              <a href="#" class="d-flex align-items-center"><svg viewBox="-4 0 32 28"><use href="#folder" width="20" height="28"/></svg>DYPG</a>
              <a href="#" class="d-flex align-items-center"><svg viewBox="-4 0 32 28"><use href="#folder" width="20" height="28"/></svg>FLFG</a>
              <a href="#" class="d-flex align-items-center"><svg viewBox="0 0 32 32"><use href="#drive"/><text x="24" y="26" text-anchor="middle" font-weight="700" font-size="22" fill="#1c7ed0">?</text></svg>R:\</a>
              <a href="#" class="d-flex align-items-center"><svg viewBox="-4 0 32 28"><use href="#folder" width="20" height="28"/></svg>XUWN</a>
              <a href="#" class="top d-flex align-items-center"><svg viewBox="0 0 32 32"><path fill="#35d0f5" d="M8 26a7 7 0 0 1-1-13Q10 4 18 7q5 3 4 9l-8 10z"/><path fill="#1565e8" d="M12 26q1-5 6-9 3-4 7-3 6 1 6 7-1 5-6 5z"/></svg>WPS云盘</a>
              <a href="#" class="top d-flex align-items-center"><svg viewBox="0 0 32 32"><path fill="#0a5bb0" d="M6 13q3-7 11-6 6 1 9 7l-9 6z"/><path fill="#1076d0" d="M6 25a6 6 0 0 1 0-12q4-1 8 2l10 10z"/><path fill="#2aa3ea" d="M6 25l18-11q8 0 8 6-1 5-6 5z"/></svg>OneDrive</a>
              <a href="#" class="top d-flex align-items-center"><svg viewBox="0 0 32 32"><path fill="#2f9fea" stroke="#7d8b97" d="M11 3l20 4v13l-19-3z"/><path fill="#cfd4d8" stroke="#9ea4a9" stroke-width=".8" d="M12 21l12 3-9 5-13-4z"/></svg>此电脑</a>
              <a href="#" class="d-flex align-items-center"><svg viewBox="0 0 32 32"><path fill="#8fe3ea" d="M2 7l14 3v18L2 24z"/><path fill="#18a3b4" d="M30 7l-14 3v18l14-4z"/><path fill="#53cad6" d="M2 7l14-4 14 4-14 3z"/></svg>3D 对象</a>
              <a href="#" class="d-flex align-items-center"><svg viewBox="0 0 32 32"><path fill="#333" d="M4 2h24v28H4z"/><path fill="#2d62c9" d="M9 3h14v12H9zM9 17h14v12H9z"/><circle cx="18" cy="9" r="4" fill="#f2c21c"/><path fill="#c33a1f" d="M9 11h14v4H9zM12 24h8v4h-8z"/><path stroke="#fff" stroke-width="2" stroke-dasharray="2 3" d="M6.500 3v26M25.500 3v26"/></svg>视频</a>
              <a href="#" class="d-flex align-items-center"><svg><use href="#pic"/></svg>图片</a>
              <a href="#" class="d-flex align-items-center"><svg viewBox="0 0 32 32"><path fill="#fff" stroke="#8e8e8e" d="M5.500 2.500h16l6 6v21h-22z"/><path fill="none" stroke="#2c8ed0" stroke-width="1.500" d="M9 11l3-6 3 6M17 7h6M17 10h7"/><path stroke="#8a8a8a" stroke-width="1.500" d="M8 15h7M8 18h7M8 21h7M8 24h17M8 27h17"/><path fill="#3a82a5" d="M17 14h8v8h-8z"/></svg>文档</a>
              <a href="#" class="d-flex align-items-center"><svg viewBox="0 0 32 32"><path fill="#3b97ea" stroke="#2678c4" d="M10 3h12v13h7L16 28 3 16h7z"/></svg>下载</a>
              <a href="#" class="d-flex align-items-center"><svg viewBox="0 0 32 32"><ellipse cx="12" cy="25" rx="6" ry="4.500" fill="#1593ea"/><path fill="#1593ea" d="M15 2h3q0 4 4 7 4 4 2 10 0-5-6-7v13h-3z"/></svg>音乐</a>
              <a href="#" class="d-flex align-items-center"><svg viewBox="0 0 32 32"><path fill="#1ba0fa" stroke="#1269ad" d="M2.500 6.500h27v19h-27z"/><path stroke="#0b5c9c" stroke-width="2" d="M3 25h26"/></svg>桌面</a>
              <a href="#" class="d-flex align-items-center"><svg viewBox="0 0 32 32"><use href="#drive"/><path fill="#1fb0ee" d="M2 7l5-1v5H2zM8 6l5-1v6H8zM2 12h5v5H2zM8 12h5v5H8z"/></svg>本地磁盘 (C:)</a>
              <a href="#" class="on d-flex align-items-center"><svg><use href="#drive"/></svg>新加卷 (E:)</a>
              <a href="#" class="d-flex align-items-center"><svg viewBox="0 0 32 32"><use href="#drive"/><path fill="none" stroke="#e0b64a" stroke-width="2.500" d="M21 11V7q0-5 4-5t4 5v4"/><path fill="#f2b53a" d="M19 11h12v11H19z"/><circle cx="25" cy="25" r="2.500" fill="#f2b53a"/></svg>本地磁盘 (G:)</a>
              <a href="#" class="d-flex align-items-center"><svg><use href="#drive"/></svg>新加卷 (M:)</a>
            </nav>
            <div class="vbar d-flex flex-column flex-shrink-0">
              <button class="btn flex-shrink-0" aria-label="向上滚动"><svg class="m-auto" width="14" height="10" fill="none" stroke="#555" stroke-width="3"><path d="M1 9l6-7 6 7"/></svg></button>
              <div class="run"></div><div class="thumb"></div>
              <button class="btn mt-auto flex-shrink-0" aria-label="向下滚动"><svg class="m-auto" width="14" height="10" fill="none" stroke="#555" stroke-width="3"><path d="M1 1l6 7 6-7"/></svg></button>
            </div>

            <div class="list-pane d-flex flex-column position-relative flex-shrink-0">
              <svg class="sort" width="14" height="8" fill="none" stroke="#777"><path d="M1 7l6-6 6 6"/></svg>
              <table class="filegrid">
                <colgroup><col><col></colgroup>
                <thead><tr><th>名称</th><th>修改日期</th></tr></thead>
                <tbody>
                  <tr class="on"><td><div class="d-flex align-items-center"><svg class="doc" width="22" height="29"><use href="#page"/></svg>backup20241111110139.npbk</div></td><td>2024/1</td></tr>
                  <tr><td><div class="d-flex align-items-center"><svg class="me-2" width="32" height="32" viewBox="0 0 32 32"><rect x="6" y="1" width="23" height="29" rx="2" fill="#fff" stroke="#9a9aa5"/><rect y="3" width="20" height="22" rx="3" fill="#ea3a2e"/><path fill="none" stroke="#fff" stroke-width="2.500" d="M6 9q8-4 9 1 0 4-6 4-4 1-3 5 2 3 5 0"/></svg>FrailDullLouse</div></td><td>2024/1</td></tr>
                  <tr><td><div class="d-flex align-items-center"><svg class="me-2" width="32" height="32" viewBox="0 0 32 32"><path fill="#f6f9ff" stroke="#a9c3f0" d="M4.500 2.500h15l7 7v20h-22z"/><path fill="#5b8def" d="M19 2l8 8h-8z"/><path fill="#d4e2fa" d="M8 27l7-9 8 9z"/><rect y="6" width="16" height="10" rx="1" fill="#5b8def"/><text x="8" y="14" text-anchor="middle" font-size="8" fill="#fff">JPG</text></svg>FrailHelplessLouse</div></td><td>2024/1</td></tr>
                  <tr><td><div class="d-flex align-items-center"><svg class="doc" width="22" height="29"><use href="#page"/></svg>FrailOpenLapwing.text</div></td><td>2024/1</td></tr>
                  <tr><td><div class="d-flex align-items-center"><svg class="doc" width="22" height="29"><use href="#page"/></svg>FrailStormyUrchin.text</div></td><td>2024/1</td></tr>
                  <tr><td><div class="d-flex align-items-center"><svg class="me-2" width="32" height="32"><use href="#edge"/></svg>FrailThoughtlessLion</div></td><td>2024/1</td></tr>
                  <tr><td><div class="d-flex align-items-center"><svg class="me-2" width="32" height="32"><use href="#edge"/></svg>FrailUnusualPony</div></td><td>2024/1</td></tr>
                  <tr><td><div class="d-flex align-items-center"><svg class="me-2" width="32" height="32"><use href="#edge"/></svg>FranticBusyGoat</div></td><td>2024/1</td></tr>
                  <tr><td><div class="d-flex align-items-center"><svg class="doc" width="22" height="29"><use href="#page"/></svg>FranticCheerfulCobra.text</div></td><td>2024/1</td></tr>
                  <tr><td><div class="d-flex align-items-center"><svg class="doc" width="22" height="29"><use href="#page"/></svg>FranticClumsySloth.text</div></td><td>2024/1</td></tr>
                  <tr><td><div class="d-flex align-items-center"><svg class="me-2" width="32" height="32" viewBox="0 0 32 32"><path fill="#a98a5e" d="M24 3l6 2 0 24-4 1z"/><path fill="#eef3f5" d="M24 3l4 26-7 1-3-6z"/><path fill="#7cc3d4" d="M10 3l14 1-4 22-20-3z"/><path stroke="#5c6b70" stroke-width="2" stroke-dasharray="1.500 1.500" d="M10 3l15 1"/></svg>Will Wight - Cradle Series (Books 1-12)- MO...</div></td><td>2024/1</td></tr>
                </tbody>
              </table>
              <div class="ring"></div>
              <div class="hbar mt-auto d-flex flex-shrink-0">
                <button class="btn" aria-label="向左滚动"><svg class="m-auto" width="10" height="14" fill="none" stroke="#555" stroke-width="3"><path d="M9 1L2 7l7 6"/></svg></button>
                <div class="thumb"></div>
                <button class="btn ms-auto" aria-label="向右滚动"><svg class="m-auto" width="10" height="14" fill="none" stroke="#555" stroke-width="3"><path d="M1 1l7 6-7 6"/></svg></button>
              </div>
            </div>

            <div class="detail flex-grow-1 overflow-hidden">
              <h1>backup20241111110139.np...</h1>
              <div>NPBK 文件</div>
              <svg width="126" height="169" viewBox="0 0 126 169"><path fill="url(#gPg)" stroke="#a3a3a3" stroke-width="1.500" d="M1 1h88l36 36v131H1z"/><path fill="#dedede" stroke="#a3a3a3" stroke-width="1.500" d="M89 1v36h36z"/></svg>
              <dl><dt>修改日期:</dt><dd>2024/11/11 11:02</dd><dt>大小:</dt><dd>5.51 GB</dd><dt>创建日期:</dt><dd>2024/11/12 13:45</dd></dl>
            </div>
          </div>

          <div class="x-status d-flex align-items-center flex-shrink-0">
            <span>11 个项目</span><i></i><span>选中 1 个项目&nbsp; 5.51 GB</span><i></i>
            <div class="ms-auto d-flex align-items-center">
              <button class="btn down" aria-label="详细信息"><svg class="m-auto" width="28" height="28"><g fill="#fff" stroke="#999" stroke-width=".8"><path d="M1 1h5v25H1zM1 6h5M1 11h5M1 16h5M1 21h5"/></g><path stroke="#777" stroke-width="2" d="M8 4h9M19 4h9M8 9h9M19 9h9M8 14h9M19 14h9M8 19h9M19 19h9M8 24h9M19 24h9"/></svg></button>
              <button class="btn" aria-label="大图标"><svg class="m-auto" width="32" height="32"><use href="#pic"/></svg></button>
            </div>
          </div>
        </section>
      </div>

      <div class="task d-flex flex-shrink-0">
        <button class="btn start" aria-label="开始"><svg class="m-auto" width="32" height="32" fill="#fff"><use href="#winlogo"/></svg></button>
        <label class="t-search d-flex align-items-center"><svg width="34" height="34" class="text-black"><use href="#glass"/></svg><input class="border-0 p-0 flex-grow-1 bg-transparent" placeholder="搜索" aria-label="搜索"></label>
        <button class="btn app view" aria-label="任务视图"><svg class="m-auto" width="32" height="30" fill="none" stroke="#fff" stroke-width="2"><path d="M1 0v5h20V0M1 9h20v12H1zM1 30v-5h20v5M29 0v4M29 16v14"/><circle cx="29" cy="10" r="3" fill="#fff" stroke="none"/></svg></button>
        <button class="btn app" aria-label="Edge"><svg class="m-auto" width="48" height="48"><use href="#edge"/></svg></button>
        <button class="btn app on" aria-label="文件资源管理器"><svg class="m-auto" width="44" height="36" viewBox="0 0 44 36"><path fill="#e5a100" d="M0 2q0-2 2-2h15l4 5v3H0z"/><path fill="#ffd04f" d="M0 7l18-1 3-2h20q3 0 3 3v26q0 2-2 2H2q-2 0-2-2z"/><path fill="#358fdd" d="M8 36V21q0-3 3-3h22q3 0 3 3v15h-7V26H15v10z"/></svg></button>
        <button class="btn app" aria-label="Microsoft Store"><svg class="m-auto" width="48" height="48" viewBox="0 0 48 48"><path fill="none" stroke="#fff" stroke-width="3" d="M16 14q0-11 8-11t8 11"/><path fill="#fff" d="M1 13h46v30q0 3-3 3H4q-3 0-3-3z"/><path fill="#f25022" d="M14 19h9v9h-9z"/><path fill="#7fba00" d="M25 19h9v9h-9z"/><path fill="#00a4ef" d="M14 30h9v9h-9z"/><path fill="#ffb900" d="M25 30h9v9h-9z"/></svg></button>
        <button class="btn app" aria-label="邮件"><svg class="m-auto" width="48" height="38" viewBox="0 0 48 38"><path fill="#fff" d="M24 0l24 13v25H0V13z"/><path fill="#00131e" d="M0 12h48L28 23l8 9-14-9z"/></svg></button>
        <button class="btn app" aria-label="WPS"><svg class="m-auto" width="48" height="31"><use href="#wps"/></svg></button>
        <button class="btn app" aria-label="浏览器"><svg class="m-auto" width="48" height="48"><use href="#chrome"/></svg></button>
        <button class="btn app run" aria-label="PowerShell"><svg class="m-auto" width="46" height="36" viewBox="0 0 46 36"><path fill="url(#gPs)" d="M8 0h36q2 0 2 2l-6 32q-1 2-2 2H2q-2 0-2-2L6 2q1-2 2-2z"/><path fill="none" stroke="#fff" stroke-width="3.500" d="M15 6l11 11-16 12M23 29h11"/></svg></button>
        <button class="btn app run" aria-label="AI"><svg class="m-auto" width="46" height="36" viewBox="0 0 46 36"><path fill="url(#gAi)" d="M0 34L16 8q2-3 5 0l14 26H24l-6-14-8 14zM28 20q0-3 5-3 4 0 6 6l6 11H36z"/><circle cx="30" cy="6" r="5.500" fill="#ff9a4d"/></svg></button>

        <div class="ms-auto d-flex align-items-center">
          <svg width="48" height="32" viewBox="0 0 48 32" fill="none" stroke="#fff" stroke-width="3"><path d="M2 2h38v28H6q-4 0-4-4zM40 7h6v20q0 3-4 3M8 9h26M25 15h9M25 20h9M25 25h9"/><path d="M9 16h10v8H9z"/></svg>
          <span class="big ms-3">18°C</span>
          <svg class="ms-4" width="48" height="16" viewBox="-11 0 48 16" fill="none" stroke="#fff" stroke-width="2"><path d="M1 14L13 2l12 12"/></svg>
          <svg class="ms-2" width="34" height="34" viewBox="0 0 34 34" fill="none" stroke="#fff" stroke-width="2"><path d="M16 30L1 26V5l29-4v17M8 14q3-6 9-4l3-2v6M8 24v-5M8 20q4 6 9 3"/><circle cx="25" cy="26" r="7" fill="#e81123" stroke="none"/></svg>
          <svg class="ms-3" width="34" height="34" viewBox="0 0 34 34" fill="none" stroke="#fff" stroke-width="2"><path d="M18 31A15 15 0 1 1 31 14M16 1q-16 15 0 30M16 1q8 7 8 15M2 11h27M2 21h15"/><circle cx="25" cy="25" r="6.500"/><path d="M20 21l10 9"/></svg>
          <svg class="ms-2 ps-1" width="36" height="34" viewBox="0 0 36 34"><path fill="none" stroke="#fff" stroke-width="2" d="M2 11h5l7-8v28l-7-8H2z"/><circle cx="26" cy="24" r="9" fill="#d9232e"/><path stroke="#fff" stroke-width="2.500" d="M22 20l8 8M30 20l-8 8"/></svg>
          <span class="ime ms-2 ps-1">英</span>
          <div class="clock">23:07<br>2025/5/8</div>
          <div class="note me-4 ms-2"><svg width="33" height="34"><path fill="#fff" d="M0 0h33v26H18l-6 8v-8H0z"/><path stroke="#00101c" stroke-width="2" d="M6 7h21M6 13h21M6 19h12"/></svg><span>1</span></div>
          <div class="peek ms-3 align-self-stretch"></div>
        </div>
      </div>
    </div>
  </main>
</div>

<footer class="host-status d-flex align-items-center justify-content-between flex-shrink-0">
  <span>要将输入定向到该虚拟机，请将鼠标指针移入其中或按 Ctrl+G。</span>
  <div class="devs d-flex align-items-center">
    <svg viewBox="0 0 24 24"><path fill="none" stroke="#7b7b7b" stroke-width="2" d="M1 15L5 3h14l4 12v6H1zM1 15h22"/><circle cx="19" cy="19" r="4" fill="#7ac51c"/></svg>
    <svg viewBox="0 0 24 24" fill="none" stroke="#bcbcc0" stroke-width="2"><circle cx="12" cy="12" r="10"/><circle cx="12" cy="12" r="3"/></svg>
    <svg viewBox="0 0 24 24" fill="none" stroke="#7b7b7b" stroke-width="2"><path d="M2 2h12v10H2zM10 8h12v9H10zM2 16h5M5 20h8" /><circle cx="19" cy="19" r="4" fill="#7ac51c" stroke="none"/></svg>
    <svg viewBox="0 0 24 24" fill="none" stroke="#bcbcc0" stroke-width="2"><path d="M6 8V2h12v6M6 17H2V8h20v9h-4M6 13h12v8H6z"/></svg>
    <svg viewBox="0 0 24 24" fill="none" stroke="#7b7b7b" stroke-width="2"><path d="M2 8h4l6-5v18l-6-5H2zM16 7q4 5 0 10"/><circle cx="19" cy="19" r="4" fill="#7ac51c" stroke="none"/></svg>
    <svg><use href="#usb"/></svg><svg><use href="#usb"/></svg>
    <svg viewBox="0 0 24 24" fill="none" stroke="#bcbcc0" stroke-width="2"><circle cx="12" cy="11" r="8"/><circle cx="12" cy="11" r="3"/><path d="M6 22h12"/></svg>
    <svg viewBox="0 0 24 24" fill="none" stroke="#bcbcc0" stroke-width="2"><ellipse cx="12" cy="12" rx="8" ry="10"/><path d="M8 9l8 6-4 4V5l4 4-8 6"/></svg>
    <svg><use href="#box"/></svg><svg><use href="#usb"/></svg><svg><use href="#box"/></svg>
    <div class="vline"></div>
    <svg viewBox="0 0 24 24"><path fill="#35e0c8" stroke="#4a8f88" d="M1 1h22v14l-8 8H1z"/><path fill="#d9f7f2" stroke="#4a8f88" d="M23 15h-8v8z"/></svg>
  </div>
</footer>
</body>
</html>
